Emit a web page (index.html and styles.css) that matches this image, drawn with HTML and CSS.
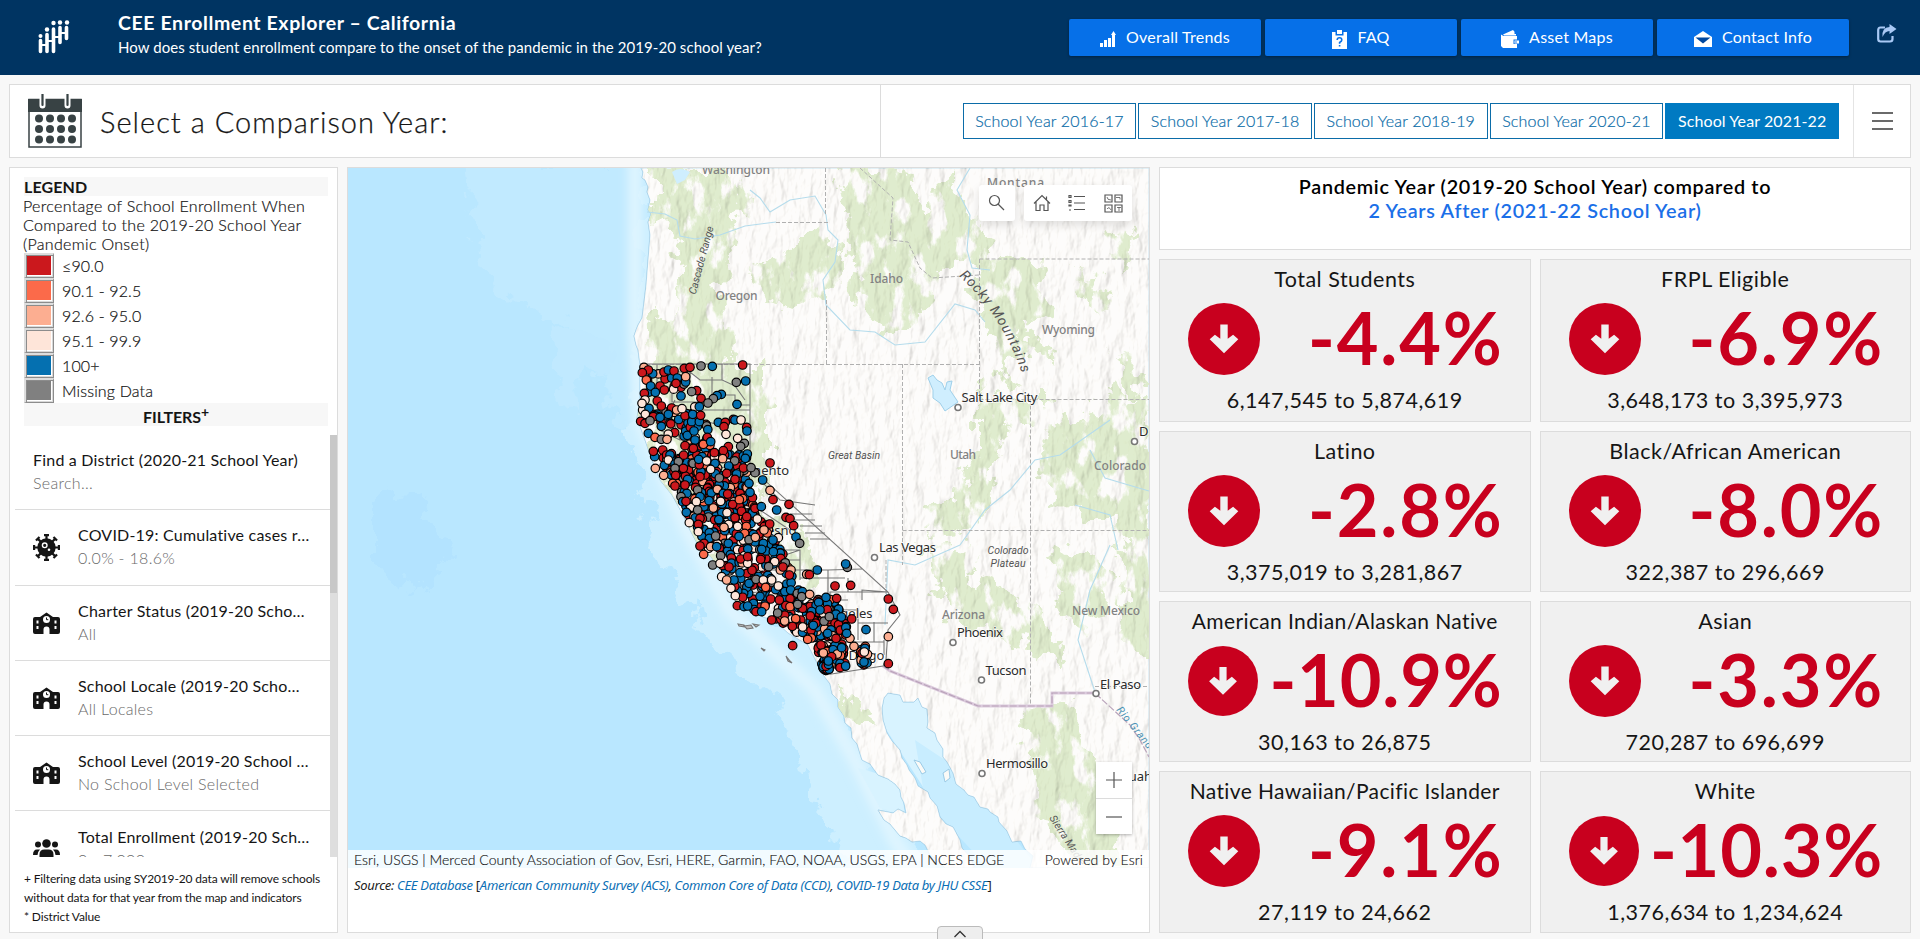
FILE: index.html
```html
<!DOCTYPE html>
<html lang="en">
<head>
<meta charset="utf-8">
<title>CEE Enrollment Explorer – California</title>
<link rel="stylesheet" href="styles.css">
</head>
<body>
<svg class="defs" width="0" height="0">
  <defs>
    <symbol id="i-down" viewBox="0 0 72 72"><circle cx="36" cy="36" r="36" fill="#c8001e"/><path d="M32.3 21.5h7.4v14.2l5.4-4 5.2 4.6L36 50.2 21.7 36.300l5.200-4.600 5.400 4z" fill="#f0f0f0"/></symbol>
    <symbol id="i-school" viewBox="0 0 27 22"><path d="M2 5h5L13.500 0.500 20 5h5a2 2 0 0 1 2 2v13a2 2 0 0 1-2 2h-8.500v-4.500a3 3 0 0 0-6 0V22H2a2 2 0 0 1-2-2V7a2 2 0 0 1 2-2z" fill="#151515"/><circle cx="13.500" cy="7.500" r="3.500" fill="#fff"/><path d="M13.500 5.500v2.200h1.800" fill="none" stroke="#151515"/><path d="M3.500 8.500h2v3h-2zM3.500 14h2v3h-2zM21.500 8.500h2v3h-2zM21.500 14h2v3h-2z" fill="#fff"/></symbol>
  </defs>
</svg>

<header class="header">
  <svg class="logo" viewBox="0 0 36 34"><g stroke="#fff" stroke-width="3.600" stroke-linecap="round"><path d="M3.500 20.500v11M10 14.500v17M16.500 9v22.500M23 7.500v15M29.500 7.500v11" fill="none"/></g><path d="M3.500 25h6.500M10 21h6.500M16.500 17h6.500M23 13h6.500" stroke="#fff" stroke-width="2"/><g fill="#fff"><circle cx="3.500" cy="16" r="2"/><circle cx="10" cy="9.500" r="2.200"/><circle cx="16.500" cy="3" r="2.200"/><circle cx="23" cy="2.500" r="2.200"/><circle cx="30" cy="2.500" r="2.200"/></g></svg>
  <div class="heading">
    <h1>CEE Enrollment Explorer – California</h1>
    <p>How does student enrollment compare to the onset of the pandemic in the 2019-20 school year?</p>
  </div>
  <nav class="nav">
    <a><svg width="16" height="17" viewBox="0 0 16 17" fill="#fff"><path d="M0 12h3v4H0zM4 9h3v7H4zM8 7h3v9H8zM12 4h3v12h-3zM13.500 0 16 4h-5z"/></svg><span>Overall Trends</span></a>
    <a><svg width="15" height="19" viewBox="0 0 15 19"><path d="M0 2h3.500v3.500h8V2H15v17H0z" fill="#fff"/><path d="M5 0h5v4H5z" fill="#fff"/><path d="M5.200 10q0-2.200 2.300-2.200T9.800 10q0 1.300-2.200 2.500v1.300M7.600 15v1.600" stroke="#0670e8" stroke-width="1.600" fill="none"/></svg><span>FAQ</span></a>
    <a><svg width="18" height="18" viewBox="0 0 18 18"><path d="M2 4.500 12 0l1.500 1.800V4H15v1.500H3zM0 4.500 2.500 6H16v3.500h-3.500v4.500H16V18H2l-2-2z" fill="#fff"/><path d="M13.500 10.500H18v3h-4.500z" fill="#fff"/><circle cx="15" cy="12" r=".8" fill="#0670e8"/></svg><span>Asset Maps</span></a>
    <a><svg width="18" height="16" viewBox="0 0 18 16"><path d="M0 6 9 0l9 6v10H0z" fill="#fff"/><path d="M1.500 6.500h15L9 12.500z" fill="#0048a0"/></svg><span>Contact Info</span></a>
  </nav>
  <svg class="share" width="20" height="19" viewBox="0 0 20 19"><path d="M8 3.500H3.500Q1.200 3.500 1.200 6v9q0 2.500 2.300 2.500H13q2.500 0 2.500-2.500v-3" fill="none" stroke="#a9c9f5" stroke-width="2.200"/><path d="M12.500 0 19.500 5l-7 5V7Q8 7 5.500 13 4.500 3.500 12.500 3z" fill="#a9c9f5"/></svg>
</header>

<section class="yearbar">
  <div class="yb-title">
    <svg width="54" height="55" viewBox="0 0 54 55"><path d="M1 5.500h52V53H1z" fill="#fff" stroke="#384244" stroke-width="1.500"/><path d="M0 5h54v13H0z" fill="#384244"/><path d="M14.500 0v11.500M39.500 0v11.500" stroke="#fff" stroke-width="6" stroke-linecap="round"/><path d="M14.500 0v11M39.500 0v11" stroke="#384244" stroke-width="2.200" stroke-linecap="round"/><g fill="#384244"><circle cx="11" cy="24.500" r="4"/><circle cx="22" cy="24.500" r="4"/><circle cx="33" cy="24.500" r="4"/><circle cx="44" cy="24.500" r="4"/><circle cx="11" cy="35" r="4"/><circle cx="22" cy="35" r="4"/><circle cx="33" cy="35" r="4"/><circle cx="44" cy="35" r="4"/><circle cx="11" cy="45.500" r="4"/><circle cx="22" cy="45.500" r="4"/><circle cx="33" cy="45.500" r="4"/><circle cx="44" cy="45.500" r="4"/></g></svg>
    <h2>Select a Comparison Year:</h2>
  </div>
  <div class="years">
    <button>School Year 2016-17</button><button>School Year 2017-18</button><button>School Year 2018-19</button><button>School Year 2020-21</button><button class="on">School Year 2021-22</button>
  </div>
  <div class="menu"><i></i><i></i><i></i></div>
</section>

<main class="main">
  <aside class="panel side">
    <div class="legend">
      <h3>LEGEND</h3>
      <p>Percentage of School Enrollment When<br>Compared to the 2019-20 School Year<br>(Pandemic Onset)</p>
      <ul>
        <li><i class="c-r"></i>≤90.0</li><li><i class="c-o"></i>90.1 - 92.5</li><li><i class="c-s"></i>92.6 - 95.0</li><li><i class="c-p"></i>95.1 - 99.9</li><li><i class="c-b"></i>100+</li><li><i class="c-g"></i>Missing Data</li>
      </ul>
      <h4>FILTERS<sup>+</sup></h4>
    </div>
    <div class="scroll">
      <div class="filters">
        <div class="f"><div><b>Find a District (2020-21 School Year)</b><span>Search...</span></div></div>
        <div class="f"><svg width="27" height="27" viewBox="-13.500 -13.500 27 27"><circle r="9.200" fill="#151515"/><g stroke="#151515" stroke-width="2.200" fill="none"><path id="sp" d="M0-8v-4.200M-2.500-12.400h5"/><use href="#sp" transform="rotate(45)"/><use href="#sp" transform="rotate(90)"/><use href="#sp" transform="rotate(135)"/><use href="#sp" transform="rotate(180)"/><use href="#sp" transform="rotate(225)"/><use href="#sp" transform="rotate(270)"/><use href="#sp" transform="rotate(315)"/></g><circle cx="-1.800" cy="-2.200" r="2.300" fill="none" stroke="#fff" stroke-width="1.400"/><circle cx="2.500" cy="2.200" r="1.300" fill="#fff"/></svg><div><b>COVID-19: Cumulative cases r…</b><span>0.0% - 18.6%</span></div></div>
        <div class="f"><svg width="27" height="22"><use href="#i-school"/></svg><div><b>Charter Status (2019-20 Scho…</b><span>All</span></div></div>
        <div class="f"><svg width="27" height="22"><use href="#i-school"/></svg><div><b>School Locale (2019-20 Scho…</b><span>All Locales</span></div></div>
        <div class="f"><svg width="27" height="22"><use href="#i-school"/></svg><div><b>School Level (2019-20 School …</b><span>No School Level Selected</span></div></div>
        <div class="f"><svg width="27" height="20" viewBox="0 0 27 20" fill="#151515"><circle cx="13.500" cy="4.500" r="4.300"/><circle cx="5" cy="5.500" r="3"/><circle cx="22" cy="5.500" r="3"/><path d="M6.500 20v-4.500q0-5 5-5h4q5 0 5 5V20zM0 16q0-5.500 4-5.500h3Q4.500 13 4.500 16zM27 16q0-5.500-4-5.500h-3q2.500 2.500 2.500 5.500z"/></svg><div><b>Total Enrollment (2019-20 Sch…</b><span>0 - 7,000</span></div></div>
      </div>
      <div class="track"><div class="thumb"></div></div>
    </div>
    <p class="note">+ Filtering data using SY2019-20 data will remove schools<br>without data for that year from the map and indicators<br>* District Value</p>
  </aside>

  <section class="panel mapcol">
    <div class="map">
      <svg class="mapsvg" viewBox="348 168 801 700" width="801" height="700">
        <defs>
          <filter id="relief" x="0" y="0" width="100%" height="100%"><feTurbulence type="fractalNoise" baseFrequency="0.085 0.035" numOctaves="4" seed="8"/><feDiffuseLighting surfaceScale="3.600" lighting-color="#fff" diffuseConstant="1.080"><feDistantLight azimuth="215" elevation="62"/></feDiffuseLighting><feColorMatrix values="1 0 0 0 0.050  0 1 0 0 0.040  0 0 1 0 0.020  0 0 0 1 0"/></filter>
          <filter id="rough" x="-10%" y="-10%" width="120%" height="120%"><feTurbulence type="fractalNoise" baseFrequency="0.045" numOctaves="4" seed="3" result="n"/><feDisplacementMap in="SourceGraphic" in2="n" scale="42" xChannelSelector="R" yChannelSelector="G"/></filter>
          <filter id="forest" x="-10%" y="-10%" width="120%" height="120%"><feTurbulence type="fractalNoise" baseFrequency="0.050" numOctaves="4" seed="3" result="n"/><feDisplacementMap in="SourceGraphic" in2="n" scale="44" xChannelSelector="R" yChannelSelector="G" result="d"/><feTurbulence type="fractalNoise" baseFrequency="0.055 0.030" numOctaves="5" seed="21"/><feColorMatrix values="0 0 0 0 0  0 0 0 0 0  0 0 0 0 0  9 0 0 0 -3.100" result="m"/><feComposite in="d" in2="m" operator="in"/></filter>
          <filter id="soft"><feGaussianBlur stdDeviation="5"/></filter>
          <path id="land" d="M641 168 643 172 642 178 645 180 648 187 647 192 650 200 648 210 651 214 648 222 650 235 648 260 646 285 643 310 642 318 638 325 636 330 634 336 636 345 638 350 640 365 640 400 637 418 645 440 652 460 660 480 672 495 682 513 690 530 698 545 712 558 722 575 735 600 752 613 775 621 788 633 808 645 818 665 824 676 830 684 832 694 838 700 838 707 844 716 845 723 851 728 852 738 857 744 862 760 870 764 878 775 888 779 895 784 900 790 901 797 904 803 906 813 898 809 893 813 878 810 884 820 890 824 900 836 906 838 912 842 920 841 925 845 930 855 935 858 945 868H975L970 857 962 848 960 840 953 827 946 824 940 817 937 806 930 798 928 792 918 786 915 778 909 770 907 765 902 758 900 750 892 741 887 733 883 720 882 708 884 698 888 693 900 695 903 702 914 702 918 698 922 707 927 709 928 722 927 728 935 733 937 740 943 749 943 757 947 762 953 773 956 784 964 790 968 795 974 797 980 807 988 809 990 812 998 817 999 822 1007 831 1012 842 1021 841 1025 849 1033 856 1030 868H1149V168Z"/>
          <clipPath id="lc"><use href="#land"/></clipPath>
        </defs>
        <rect x="348" y="168" width="801" height="700" fill="#b9e7ff"/>
        <g filter="url(#rough)">
          <path d="M465 160H660V440L610 420 595 340 560 320 510 300 475 270Z" fill="#c1eaff"/>
          <path d="M370 500 420 495 440 530 450 570 410 590 370 560Z" fill="#b3e3ff"/>
          <path d="M545 320 580 330 608 350 600 375 575 380 580 410 555 408 562 370Z" fill="#c0e9ff"/>
          <path d="M640 160H670L665 330 655 420 735 590 835 670 885 800 945 880H850L810 780 770 690 710 640 660 560 630 440 640 350Z" fill="#cdefff"/>
        </g>
        <path d="M635 160V330L640 420 685 525 730 610 815 690 855 760 895 840 920 880" fill="none" stroke="#dff5ff" stroke-width="14" filter="url(#soft)"/>
        <path d="M875 670H940L950 760 925 790 880 720Z" fill="#d8f3ff"/><path d="M915 740 960 770 1040 870H990L925 800Z" fill="#c8edff"/>
        <path d="M858 768 900 780 905 815 880 808Z" fill="#d8f3ff"/>
        <use href="#land" fill="#fbfaf7" stroke="#9ccbe6" stroke-width="1"/>
        <path d="M914 760 920 762 926 772 922 774ZM943 773 949 769 950 778 945 782Z" fill="#fbfaf7" stroke="#9ccbe6"/>
        <g clip-path="url(#lc)">
          <g filter="url(#forest)" fill="#dfecce">
            <path d="M655 165H735L745 200 730 235 722 290 732 375 650 380 648 330 675 300 680 240 655 215Z"/>
            <path d="M840 165H900L925 210 950 180 985 230 1000 270 945 260 925 310 890 340 865 310 850 240Z"/>
            <path d="M750 270 815 230 845 250 838 290 790 310 765 300Z"/>
            <path d="M990 165 985 250 1040 260 1050 310 1030 320 1050 360 1020 340 1005 390 990 330 975 290 985 230Z"/>
            <path d="M1070 265 1095 275 1105 315 1085 298ZM1110 230 1135 235 1125 270ZM1115 355 1145 370 1140 410Z"/>
            <path d="M980 375 995 400 1050 400 1060 430 1000 430 995 480 975 530 920 535 950 500 980 450Z"/>
            <path d="M1050 430 1090 420 1110 385 1149 410 1159 470 1145 550 1110 520 1060 510 1040 480Z"/>
            <path d="M1045 560 1080 545 1115 580 1090 630 1060 610ZM1120 540 1159 550 1159 660 1125 640Z"/>
            <path d="M935 560 1000 590 1040 610 1070 670 1010 640 945 615ZM920 545 980 550 960 590Z"/>
            <path d="M640 365H770V490L710 490 700 530 730 580 750 620 710 600 670 500 645 430Z"/>
            <path d="M750 480 800 530 820 580 810 600 780 570ZM1020 710 1070 705 1095 770 1125 868H1080L1040 820Z"/>
            <path d="M835 690 860 700 870 735 855 732Z"/>
          </g>
          <rect x="600" y="168" width="549" height="700" filter="url(#relief)" class="relief"/>
        </g>
        <g fill="#cfeefe" stroke="#9fd0ea" stroke-width="1">
          <path d="M928 378 933 375 937 380 942 383 945 390 947 382 952 381 950 390 958 402 945 411 940 403 933 398 933 390Z"/>
          <path d="M672 172q8-6 18 0l-5 8-8 4z" stroke="none"/>
        </g>
        <path d="M647 212 665 214 677 220 680 236 695 239 720 235 745 226 776 222M750 190 760 198 770 212 790 200 815 196 826 215 828 230 838 240 835 262 823 280 826 305 850 330 875 332 895 345 925 342 955 304 975 310 985 322M970 168 957 190 970 215 967 250 972 268 990 270M1149 491 1105 478 1090 450M960 545 985 510 1010 490 1035 460 1060 455 1110 420M1110 545 1090 590 1078 640 1095 692M885 625 888 560 915 565 960 545M1075 505 1110 515 1118 550" fill="none" stroke="#b5dcec" stroke-width="1.100"/>
        <g class="state">
          <path d="M640 364.500H979.500M825.500 168V215M826.500 300V364M776 222.500H829M902.500 364V565M979.500 259V399.500M979.500 259H1149M979.500 399.500H1149M1030.500 399.500V706M902.500 530.500H1149M860 168 893 198 890 240 908 242 920 268 932 278 979 275M1095 686.500H1149M886 560V600"/>
        </g>
        <path d="M883 666 890 671 978 706H1052V693H1095" fill="none" stroke="#dccbdd" stroke-width="3"/><path d="M883 666 890 671 978 706H1052V693H1095L1108 705 1130 725 1140 740 1149 757" fill="none" stroke="#b9a3ba" stroke-width="1.200" stroke-dasharray="7 2"/>
        <g class="county">
          <path d="M640 364H750V467L888 592 900 615 888 630 886 660 883 666 825 675"/>
          <path d="M657 364V385L672 388V402H700V420L720 425M657 372 690 372 700 380H722M690 364V382M722 364V380L735 386 745 400M712 377V395H735V405H750M700 410H750M673 420 680 440H700L705 455H750M675 400 668 415 660 430 680 440M670 460H700V475L720 490 750 480M705 470 740 465 750 475M700 500 730 520 760 510 790 530M715 540 740 530 770 560 800 550M760 480 780 500 815 505M790 514H812M795 520H815M800 526H822M805 533H825M810 539H830M738 595 770 590 800 600M740 570H828M800 570H828V600H848M828 570 862 569M770 530V560H800V578H845M848 578V592H888M848 592H830V612M862 600V590L888 592M828 610H858V623H888M858 623V640M874 622V642M830 642H884M845 642V668M884 640V655M775 550H800V580M725 555 755 585H790M680 480 702 510M690 466 715 500 735 485"/>
          <path d="M738 624l6 1 1 2-6-1zM744 626l7-1 2 3-6 1zM753 624l6 1-3 2zM761 648l4 2-1 1zM786 656l4 5 2 2-4-2z" fill="#bbb"/>
        </g>
        <g class="dark"><text x="749" y="475">mento</text><text x="767" y="535">esno</text><text x="824" y="618">Angeles</text><text x="837" y="660">n Diego</text></g>
        <g id="dots" transform="translate(620 350) scale(.33333)" stroke="#000" stroke-width="3.600"></g>
        <g class="gray">
          <text x="702" y="174" textLength="68">Washington</text><text x="715.500" y="300" textLength="42">Oregon</text><text x="870" y="282.500" textLength="33">Idaho</text><text x="987" y="187" textLength="57">Montana</text><text x="1042" y="333.500" textLength="53">Wyoming</text><text x="950" y="458.500" textLength="26">Utah</text><text x="1094" y="469.500" textLength="52">Colorado</text><text x="942" y="619" textLength="43">Arizona</text><text x="1072" y="615" textLength="68">New Mexico</text>
        </g>
        <g class="dark">
          <text x="961.500" y="402" textLength="76">Salt Lake City</text><text x="1139" y="436">Denver</text><text x="879" y="552" textLength="57">Las Vegas</text><text x="957" y="637" textLength="46">Phoenix</text><text x="985.500" y="674.500" textLength="41">Tucson</text><text x="1100" y="688.500" textLength="41">El Paso</text><text x="986" y="768" textLength="62">Hermosillo</text><text x="1101" y="781">Chihuahua</text>
        </g>
        <g fill="#fff" stroke="#777" stroke-width="1.600"><circle cx="958" cy="407.500" r="3"/><circle cx="1134.500" cy="441.500" r="3"/><circle cx="874.500" cy="557.500" r="3"/><circle cx="953" cy="642.500" r="3"/><circle cx="981.500" cy="680" r="3"/><circle cx="1096" cy="693.500" r="3"/><circle cx="982" cy="773.500" r="3"/></g>
        <g class="terrain">
          <text x="828" y="458.500" textLength="52">Great Basin</text><text x="987.500" y="554" textLength="41">Colorado</text><text x="990.500" y="566.500" textLength="35">Plateau</text>
          <text transform="translate(695.500 295) rotate(-75)" textLength="70">Cascade Range</text>
          <path id="rm" d="M959 276Q1005 318 1024 380" fill="none"/><text class="big"><textPath href="#rm" textLength="117">Rocky Mountains</textPath></text>
          <text transform="translate(1049 818) rotate(57)">Sierra Madre</text>
          <text transform="translate(1116 710) rotate(51)" class="rio">Rio Grande</text>
        </g>
      </svg>
      <div class="tool search"><svg width="18" height="18" viewBox="0 0 18 18"><circle cx="6.500" cy="6.500" r="5" /><path d="M10 10l6 6"/></svg></div>
      <div class="tool group">
        <svg width="18" height="18" viewBox="0 0 18 18"><path d="M1 9.500 9 1.500l8 8M3 8v8.500h4V11h4v5.500h4V8M13.500 5.500V2.500"/></svg>
        <svg width="18" height="18" viewBox="0 0 18 18"><path d="M6 2.500h11M6 9h11M6 15.500h11M1 1.500h2v2H1zM1 6.500h2v2H1zM1 11h2v1H1zM1 16h2"/></svg>
        <svg width="19" height="19" viewBox="0 0 19 19"><path d="M1 1h7v7H1zM11 1h7v7h-7zM1 11h7v7H1zM11 11h7v7h-7z"/><path d="M3 3q0 3 4 3M12 3.500h4v2M3 15q2-3 4 1M13 13.500h4M15 13v4" stroke-width=".8"/></svg>
      </div>
      <div class="zoom"><div><svg width="18" height="18"><path d="M9 1v16M1 9h16"/></svg></div><div><svg width="18" height="18"><path d="M1 9h16"/></svg></div></div>
      <div class="attrib"><span>Esri, USGS | Merced County Association of Gov, Esri, HERE, Garmin, FAO, NOAA, USGS, EPA | NCES EDGE</span><span class="pw">Powered by Esri</span></div>
    </div>
    <p class="source">Source: <a>CEE Database</a> <u>[</u><a>American Community Survey (ACS)</a>, <a>Common Core of Data (CCD)</a>, <a>COVID-19 Data by JHU CSSE</a><u>]</u></p>
  </section>

  <section class="stats">
    <div class="panel compare">Pandemic Year (2019-20 School Year) compared to<br><em>2 Years After (2021-22 School Year)</em></div>
    <div class="cards">
      <article><h5>Total Students</h5><div class="v"><svg><use href="#i-down"/></svg><strong>-4.4%</strong></div><p>6,147,545 to 5,874,619</p></article>
      <article><h5>FRPL Eligible</h5><div class="v"><svg><use href="#i-down"/></svg><strong>-6.9%</strong></div><p>3,648,173 to 3,395,973</p></article>
      <article><h5>Latino</h5><div class="v"><svg><use href="#i-down"/></svg><strong>-2.8%</strong></div><p>3,375,019 to 3,281,867</p></article>
      <article><h5>Black/African American</h5><div class="v"><svg><use href="#i-down"/></svg><strong>-8.0%</strong></div><p>322,387 to 296,669</p></article>
      <article><h5 class="long">American Indian/Alaskan Native</h5><div class="v w"><svg><use href="#i-down"/></svg><strong>-10.9%</strong></div><p>30,163 to 26,875</p></article>
      <article><h5>Asian</h5><div class="v"><svg><use href="#i-down"/></svg><strong>-3.3%</strong></div><p>720,287 to 696,699</p></article>
      <article><h5 class="long">Native Hawaiian/Pacific Islander</h5><div class="v"><svg><use href="#i-down"/></svg><strong>-9.1%</strong></div><p>27,119 to 24,662</p></article>
      <article><h5>White</h5><div class="v w"><svg><use href="#i-down"/></svg><strong>-10.3%</strong></div><p>1,376,634 to 1,234,624</p></article>
    </div>
  </section>
</main>
<div class="handle"><svg width="14" height="8" viewBox="0 0 14 8"><path d="M1.500 7 7 1.500 12.500 7" fill="none" stroke="#333" stroke-width="1.300"/></svg></div>
<script src="map.js"></script>
</body>
</html>
```

FILE: styles.css
```css
* { box-sizing: border-box; }
body { margin: 0; width: 1920px; height: 939px; overflow: hidden; background: #f8f8f8; color: #151515; font-family: Lato, "Open Sans", sans-serif; display: flex; flex-direction: column; position: relative; }
h1, h2, h3, h4, h5, p, ul { margin: 0; padding: 0; font-weight: inherit; }
li { list-style: none; }
.defs { position: absolute; }

.header { height: 75px; flex: none; background: #003462; display: flex; align-items: flex-start; color: #fff; padding-left: 37px; }
.logo { width: 36px; height: 34px; margin-top: 20px; }
.heading { margin-left: 45px; width: 951px; padding-top: 10px; white-space: nowrap; }
.heading h1 { font-size: 19.500px; line-height: 26px; font-weight: 700; letter-spacing: .6px; }
.heading p { font-size: 15px; line-height: 22px; letter-spacing: .07px; }
.nav { display: flex; gap: 4px; margin-top: 19px; }
.nav a { width: 192px; height: 37px; background: #0670e8; border-radius: 2px; box-shadow: 0 1px 3px rgba(0,0,0,.35); display: flex; align-items: center; justify-content: center; gap: 10px; font-size: 16px; letter-spacing: .25px; }
.nav svg { margin-top: 3px; }
.nav span { margin-top: -2px; }
.share { margin: 24px 0 0 28px; }

.yearbar { margin: 9px 9px 0; height: 74px; flex: none; background: #fff; border: 1px solid #dcdcdc; display: flex; }
.yb-title { width: 871px; border-right: 1px solid #dcdcdc; display: flex; align-items: center; padding-left: 18px; gap: 18px; }
.yb-title h2 { font-size: 29px; font-weight: 300; letter-spacing: 1.030px; -webkit-text-stroke: .25px; }
.years { flex: 1; display: flex; align-items: center; justify-content: flex-end; gap: 2px; padding-right: 14px; }
.years button { width: 173.700px; height: 36px; padding: 0; border: 1px solid #0b6ca8; background: #fff; color: #0b6ca8; font: 300 16px Lato, sans-serif; letter-spacing: .18px; -webkit-text-stroke: .2px; margin-bottom: 1px; white-space: nowrap; }
.years button.on { background: #007ac2; color: #fff; font-weight: 400; border-color: #007ac2; letter-spacing: .1px; -webkit-text-stroke: 0; }
.menu { width: 57px; border-left: 1px solid #e4e4e4; display: flex; flex-direction: column; align-items: center; justify-content: center; gap: 6px; }
.menu i { width: 21px; height: 2px; background: #6a6a6a; }

.main { flex: none; display: grid; grid-template-columns: 329px 803px 752px; gap: 9px; margin: 9px 9px 0; height: 766px; }
.panel { background: #fff; border: 1px solid #dcdcdc; }

.side { display: flex; flex-direction: column; }
.legend { padding: 9px 9px 0 14px; height: 267px; font-size: 16px; font-weight: 300; line-height: 19px; letter-spacing: .33px; -webkit-text-stroke: .2px; }
.legend h3 { font-size: 16px; font-weight: 700; line-height: 19px; background: #f7f7f7; letter-spacing: .1px; -webkit-text-stroke: 0; }
.legend p { white-space: nowrap; margin-left: -1px; }
.legend li { height: 25px; display: flex; align-items: center; gap: 8px; letter-spacing: .15px; }
.legend i { width: 30px; height: 25px; border: solid #ddd; border-right-color: #8c8c8c; border-bottom-color: #8c8c8c; box-shadow: inset 1px 1px #8c8c8c, inset -1px -1px #d8d8d8; border-width: 2px 1px 1px 2px; padding: 0 2px 2px 0; background-clip: content-box; }
.c-r { background-color: #cb181d; } .c-o { background-color: #fb6a4a; } .c-s { background-color: #fcae91; } .c-p { background-color: #fee5d9; } .c-b { background-color: #0570b0; } .c-g { background-color: #808080; }
.legend h4 { height: 23px; background: #f7f7f7; font-size: 16px; font-weight: 700; text-align: center; line-height: 27px; letter-spacing: -.1px; -webkit-text-stroke: 0; }
.legend sup { font-size: 14px; line-height: 0; font-weight: 700; }
.scroll { height: 422px; display: flex; overflow: hidden; }
.filters { flex: 1; padding-left: 5px; }
.f { height: 75.300px; border-bottom: 1px solid #dcdcdc; display: flex; align-items: center; padding-left: 18px; gap: 18px; }
.f b { display: block; font-weight: 400; font-size: 16px; line-height: 23px; letter-spacing: .2px; white-space: nowrap; }
.f span { display: block; font-weight: 300; font-size: 16px; line-height: 24px; color: #6a6a6a; letter-spacing: .3px; }
.f div { padding-bottom: 1px; }
.track { width: 7px; background: #dedede; }
.thumb { height: 158px; background: #c8c8c8; }
.note { padding: 12px 0 0 14px; font-size: 12px; font-weight: 400; line-height: 19px; letter-spacing: -.15px; white-space: nowrap; }

.mapcol { display: flex; flex-direction: column; }
.map { position: relative; height: 700px; overflow: hidden; }
.mapsvg { display: block; font-family: "Noto Sans", sans-serif; }
.relief { mix-blend-mode: multiply; opacity: .45; }
.state { fill: none; stroke: #b0b0b0; stroke-width: 1; stroke-dasharray: 4 2; }
.county { fill: none; stroke: #777; stroke-width: 1.100; }
.gray { font-size: 12px; fill: #828282; stroke: none; font-weight: 500; }
.dark { font-size: 13px; fill: #2b2b2b; paint-order: stroke; stroke: #fff; stroke-width: 1.500px; stroke-opacity: .7; }
.terrain { font-family: Roboto, sans-serif; font-style: italic; font-size: 10.500px; fill: #555; }
.terrain .big { font-size: 14px; }
.terrain .rio { fill: #4b93b5; letter-spacing: .8px; }
.tool { position: absolute; top: 17px; height: 36px; background: #fff; border-radius: 3px; box-shadow: 0 4px 10px rgba(0,0,0,.12); display: flex; align-items: center; justify-content: space-around; }
.tool svg, .zoom svg { fill: none; stroke: #555; stroke-width: 1.200; }
.search { left: 631px; width: 36px; }
.group { left: 676px; width: 108px; }
.zoom { position: absolute; left: 748px; top: 594px; width: 36px; height: 72px; background: #fff; box-shadow: 0 1px 3px rgba(0,0,0,.3); }
.zoom div { height: 36px; display: grid; place-items: center; }
.zoom div + div { border-top: 1px solid #dcdcdc; }
.attrib { position: absolute; left: 0; right: 0; bottom: 0; height: 18px; background: rgba(255,255,255,.82); display: flex; justify-content: space-between; padding: 0 6px; font-size: 14px; font-weight: 300; line-height: 19px; white-space: nowrap; letter-spacing: .02px; -webkit-text-stroke: .15px; }
.pw { letter-spacing: .1px; }
.source { padding: 9px 6px; font: italic 13px/16px "Noto Sans", sans-serif; letter-spacing: -.29px; white-space: nowrap; color: #222; }
.source a { color: #0b6fb5; }
.source u { text-decoration: none; font-style: normal; }

.stats { display: flex; flex-direction: column; gap: 9px; }
.compare { height: 83px; padding-top: 6px; text-align: center; font-size: 19.800px; font-weight: 600; line-height: 24px; letter-spacing: .7px; color: #000; }
.compare em { font-style: normal; color: #1b6fe8; }
.cards { flex: 1; display: grid; grid-template-columns: 1fr 1fr; grid-template-rows: 163px 161px 161px 162px; gap: 9px; }
.cards article { background: #f0f0f0; border: 1px solid #dcdcdc; text-align: center; padding: 5px 28px 0; white-space: nowrap; }
.cards h5 { font-size: 21.500px; line-height: 28px; letter-spacing: .5px; margin: 0 -20px; }
.cards .long { font-size: 21px; letter-spacing: .38px; }
.v { display: flex; align-items: center; justify-content: space-between; height: 72px; margin-top: 10px; }
.v svg { width: 72px; height: 72px; flex: none; }
.w svg { width: 70px; height: 70px; }
.v strong { font-size: 72px; font-weight: 700; color: #c8001e; line-height: 72px; margin: -4px -2px 0 0; letter-spacing: 1.800px; }
.w strong { letter-spacing: .8px; margin-right: -1px; }
.cards p { font-size: 21.500px; line-height: 28px; margin-top: 11px; letter-spacing: .5px; }

.handle { position: absolute; left: 937px; top: 926px; width: 46px; height: 16px; background: #eee; border: 1px solid #bbb; border-radius: 4px 4px 0 0; display: flex; justify-content: center; padding-top: 3px; }
```

FILE: map.js
```js
// District markers. R ≤90, O 90.1-92.5, S 92.6-95, P 95.1-99.9, B 100+, G missing
const colors = { R: '#cb181d', O: '#fb6a4a', S: '#fcae91', P: '#fee5d9', B: '#0570b0', G: '#808080' };
const districts = `S72,52 R85,60 R67,68 O79,90 R132,66 B145,60 R162,63 R193,55 R210,52 B172,84 R168,100 B197,96 S197,80 G243,48 B277,49 R368,45 G349,97 B377,93 B92,108 R120,108 R133,120 R73,130 B106,127 B183,138 R230,122 G215,125 R243,145 B304,133 B291,137 G280,146 G264,159 B351,163 P75,150 R112,153 R124,168 P68,180 P66,160 B87,175 P76,193 R155,174 S170,180 B145,193 R100,200 R62,214 R75,220 G90,212 B120,202 B124,229 B85,250 O105,262 G124,268 S141,268 R195,197 B238,170 P186,176 B215,215 B238,215 B218,193 R242,196 B295,217 R316,217 R312,230 P318,253 R340,208 B345,210 P363,210 R380,232 B381,243 P353,265 G373,280 G362,289 B202,256 B222,243 B225,270 R195,287 R220,295 R262,262 O250,283 B272,275 R325,290 R283,308 R310,302 S308,326 R128,300 R140,315 B104,320 R100,304 B150,315 B133,346 P145,330 S106,355 S131,376 B165,342 G175,335 R190,355 G165,355 B236,328 P260,333 B285,340 B326,348 B370,318 B382,312 B376,325 G405,368 G393,353 R450,339 R240,380 P272,358 R320,370 G298,384 B350,372 R345,388 B387,400 B428,390 S450,421 R459,449 B470,480 R507,463 R498,502 R510,506 R521,527 B528,561 G539,580 R167,376 O158,400 R165,408 B203,388 R195,405 G233,420 G183,440 B188,455 R198,454 B240,440 P229,455 B267,452 S292,418 B310,430 R323,432 S280,474 B302,453 P302,454 R338,463 R360,430 O368,445 O358,449 B390,427 G233,480 B199,487 P208,518 R240,505 R235,523 P235,545 B335,500 P321,488 R345,503 P353,529 S312,532 R380,500 R405,475 P412,507 B424,470 R449,522 S432,540 B268,548 B268,565 G287,558 R252,580 R240,588 O251,613 S272,590 B290,590 B325,580 G302,617 B357,559 G387,569 S406,562 P475,563 B430,580 B459,570 G278,645 P300,640 R327,651 P305,680 B342,690 S320,690 B360,668 R362,627 P383,640 R383,620 B425,598 R422,628 B460,605 P464,635 G446,650 R489,651 S513,660 R508,675 S560,673 R568,674 B592,660 G682,652 B677,642 R645,708 R692,706 P333,715 P346,737 B387,700 G408,688 P430,690 P455,690 O437,712 P475,708 B420,739 R452,747 R478,750 B512,720 G532,730 B547,725 G545,740 S569,733 R352,767 B372,770 B383,768 R408,785 B425,785 G473,789 R455,810 S494,813 O510,770 R548,775 G533,763 B596,757 R650,745 B618,742 G628,800 B600,780 B664,801 R695,807 O527,806 R517,829 P548,831 B580,826 B623,850 O563,868 R603,885 R648,865 S690,865 B680,850 R518,887 B738,839 S805,860 R805,747 R820,778 R805,941 S702,889 B735,895 P733,906 B732,936 S610,909 S652,912 B665,893 R635,920 B625,933 B660,940 R660,953 B677,948`;
// Overlapping markers under the named ones: [count, quadrilateral corners]
const clusters = [
  [30, [75, 60], [210, 60], [240, 290], [105, 250]],
  [34, [190, 190], [245, 190], [310, 330], [200, 320]],
  [110, [105, 310], [385, 310], [380, 410], [170, 400]],
  [105, [170, 400], [385, 400], [420, 500], [205, 500]],
  [85, [215, 490], [430, 480], [480, 610], [255, 600]],
  [48, [285, 590], [480, 590], [520, 690], [325, 690]],
  [46, [335, 700], [520, 680], [560, 780], [385, 780]],
  [90, [455, 800], [600, 750], [640, 860], [560, 865]],
  [90, [570, 750], [645, 745], [690, 855], [570, 870]],
  [56, [590, 880], [670, 880], [680, 950], [600, 950]],
  [22, [605, 945], [625, 940], [630, 960], [610, 965]],
  [14, [722, 885], [745, 890], [745, 948], [722, 948]]
];
let seed = 4217;
const rnd = () => (seed = (seed * 16807) % 2147483647) / 2147483647;
const svgNS = 'http://www.w3.org/2000/svg';
const layer = document.getElementById('dots');
function dot(x, y, kind) {
  const c = document.createElementNS(svgNS, 'circle');
  c.setAttribute('cx', x); c.setAttribute('cy', y); c.setAttribute('r', 12.8);
  c.setAttribute('fill', colors[kind]);
  layer.appendChild(c);
}
for (const [n, a, b, c, d] of clusters) {
  for (let i = 0; i < n; i++) {
    const u = rnd(), v = rnd(), k = 'BBBBBRRRRRGSPO'[Math.floor(rnd() * 14)];
    const at = j => (a[j] * (1 - u) + b[j] * u) * (1 - v) + (d[j] * (1 - u) + c[j] * u) * v;
    dot(at(0).toFixed(1), at(1).toFixed(1), k);
  }
}
for (const item of districts.split(' ')) {
  const [x, y] = item.slice(1).split(',');
  dot(x, y, item[0]);
}
```
